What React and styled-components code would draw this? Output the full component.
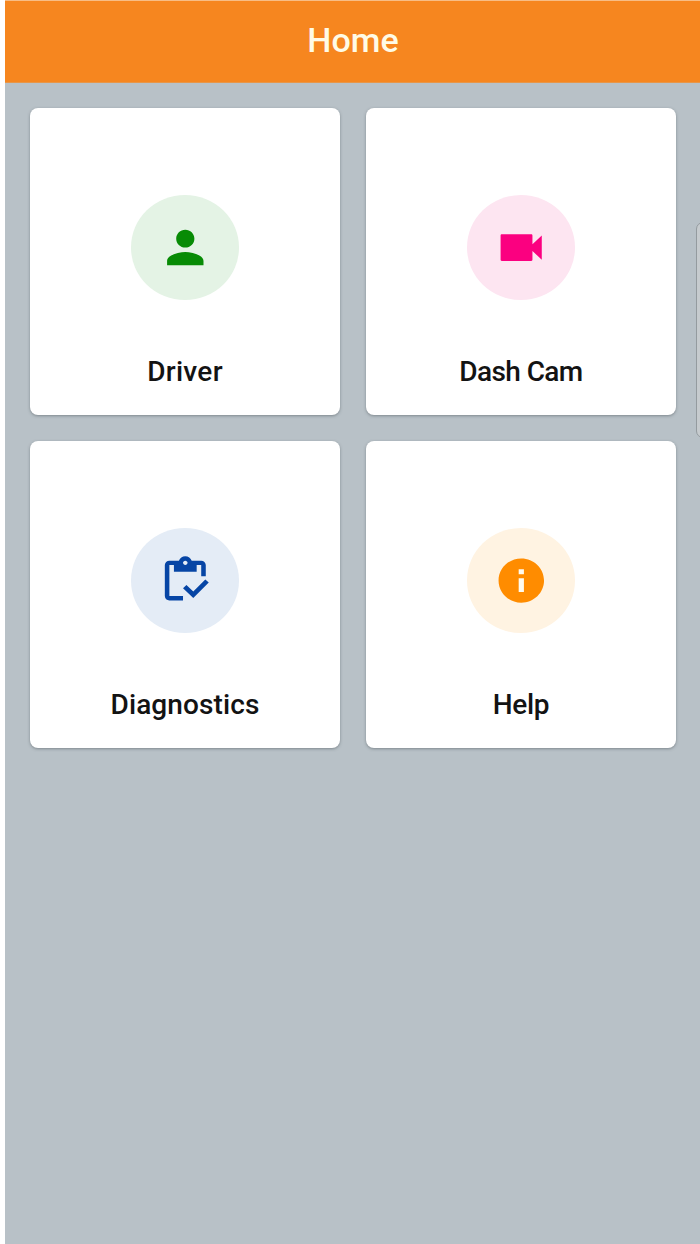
import React from "react";
import styled, { createGlobalStyle } from "styled-components";

const GlobalStyle = createGlobalStyle`
  * { box-sizing: border-box; }
  body { margin: 0; background: #fff; font-family: Roboto, "Liberation Sans", sans-serif; }
`;

const Screen = styled.main`
  position: relative;
  height: 1244px;
  width: 695px;
  margin-left: 5px;
  background: #b8c1c7;
  overflow: hidden;
`;

const Header = styled.header`
  height: 83px;
  display: flex;
  align-items: center;
  justify-content: center;
  background: #f6861f;
  border-top: 1px solid #f8bd85;
  border-bottom: 1px solid #e79648;
`;

const Title = styled.h1`
  margin: 0;
  padding: 0 0 3px 1px;
  color: #fffbe6;
  font-size: 34px;
  line-height: 40px;
  font-weight: 500;
  letter-spacing: 0.1px;
`;

const Grid = styled.section`
  display: grid;
  grid-template-columns: 310px 310px;
  grid-auto-rows: 307px;
  gap: 26px;
  padding: 25px;
`;

const Card = styled.article`
  display: flex;
  flex-direction: column;
  align-items: center;
  padding-top: 87.4px;
  background: #fff;
  border-radius: 8px;
  box-shadow: 0 1px 3px rgba(70, 80, 85, 0.5);
`;

const IconDisc = styled.div`
  width: 108.5px;
  height: 105px;
  display: flex;
  align-items: center;
  justify-content: center;
  border-radius: 50%;
  background: ${(p) => p.$bg};
  color: ${(p) => p.$fg};
`;

const Glyph = styled.svg`
  width: 54.6px;
  height: 53.2px;
  fill: currentColor;
`;

const Label = styled.h2`
  margin: 55px 0 0;
  color: #131313;
  font-size: 28px;
  line-height: 34px;
  font-weight: 500;
  letter-spacing: ${(p) => p.$spacing}px;
`;

const EdgeHandle = styled.div`
  position: absolute;
  top: 222px;
  left: 691px;
  width: 14px;
  height: 216px;
  border: 1px solid #949b9f;
  border-radius: 7px;
  background: #c6cbce;
`;

const tiles = [
  {
    label: "Driver", bg: "#e4f3e5", fg: "#078b05", spacing: 0.3,
    path: "M12 12c2.21 0 4-1.79 4-4s-1.79-4-4-4-4 1.79-4 4 1.79 4 4 4zm0 2c-2.67 0-8 1.34-8 4v2h16v-2c0-2.66-5.33-4-8-4z",
  },
  {
    label: "Dash Cam", bg: "#fde5f1", fg: "#fb0080", spacing: -0.6,
    path: "M16.900 10.500V6.500c0-.3-.2-.5-.5-.5H3.400c-.3 0-.5.200-.5.500v11c0 .3.200.5.500.500h13c.3 0 .5-.200.500-.500v-4l4.100 4v-11l-4.100 4z",
  },
  {
    label: "Diagnostics", bg: "#e4ecf6", fg: "#0645a5", spacing: 0.1,
    path: "M5 5h2v3h10V5h2v5h2V5c0-1.100-.9-2-2-2h-4.180C14.400 1.840 13.300 1 12 1s-2.400.84-2.820 2H5c-1.100 0-2 .9-2 2v14c0 1.100.9 2 2 2h6v-2H5V5zm7-2c.55 0 1 .45 1 1s-.45 1-1 1-1-.45-1-1 .45-1 1-1zM20.800 11.500 15.510 16.900l-3.010-2.900-1.500 1.500 4.510 4.400 6.800-7z",
  },
  {
    label: "Help", bg: "#fff3e2", fg: "#ff8c00", spacing: -0.3,
    path: "M12 2C6.480 2 2 6.480 2 12s4.480 10 10 10 10-4.480 10-10S17.520 2 12 2zm1.150 15.100h-2.300v-6.200h2.300v6.200zm0-8h-2.300V6.900h2.300v2.200z",
    cutout: "#fffbf0",
  },
];

export default function App() {
  return (
    <>
      <GlobalStyle />
      <Screen>
        <Header>
          <Title>Home</Title>
        </Header>
        <Grid>
          {tiles.map((t) => (
            <Card key={t.label}>
              <IconDisc $bg={t.bg} $fg={t.fg}>
                <Glyph viewBox="0 0 24 24" preserveAspectRatio="none" aria-hidden="true">
                  {t.cutout && <rect x="10" y="6" width="4" height="12" fill={t.cutout} />}
                  <path d={t.path} />
                </Glyph>
              </IconDisc>
              <Label $spacing={t.spacing}>{t.label}</Label>
            </Card>
          ))}
        </Grid>
        <EdgeHandle />
      </Screen>
    </>
  );
}
